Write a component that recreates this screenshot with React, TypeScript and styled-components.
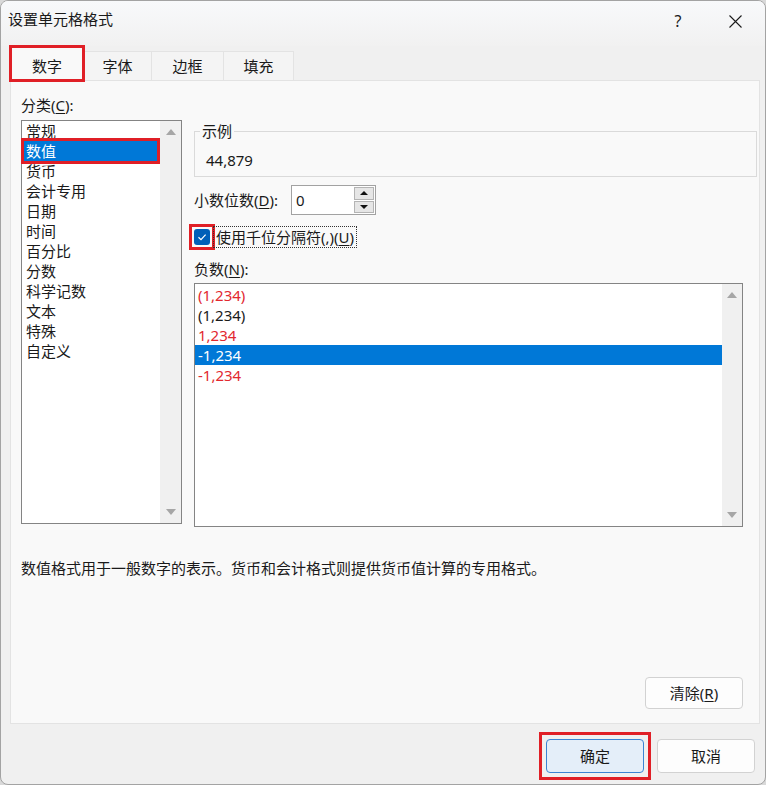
import React from 'react';
import styled, { createGlobalStyle } from 'styled-components';

const GlobalStyle = createGlobalStyle`
  html, body {
    margin: 0;
    padding: 0;
    background: #d9d9d9;
  }
  body {
    font-family: "Segoe UI", "Noto Sans", "Noto Sans CJK SC", sans-serif;
    font-size: 15px;
    line-height: 20px;
    color: #1a1a1a;
  }
  * { box-sizing: border-box; }
`

const MARK = '#e01f26'

const Dialog = styled.div`
  width: 766px;
  height: 785px;
  display: flex;
  flex-direction: column;
  background: #f0f0f0;
  border: 1px solid #a3a3a3;
  border-radius: 8px;
  overflow: hidden;
`
const TitleBar = styled.div`
  height: 45px;
  flex-shrink: 0;
  display: flex;
  align-items: flex-start;
  padding: 8px 7px 0 7px;
  background: linear-gradient(#f8f9fb, #f1f1f1);
`
const TitleText = styled.div`
  line-height: 20px;
`
const TitleActions = styled.div`
  margin-left: auto;
  margin-top: -4px;
  display: flex;
  gap: 11px;
`
const TitleAction = styled.div`
  width: 46px;
  height: 32px;
  display: flex;
  align-items: center;
  justify-content: center;
  font-size: 16px;
  color: #1b1b1b;
`
const TabStrip = styled.div`
  height: 35px;
  flex-shrink: 0;
  display: flex;
  align-items: flex-end;
  margin: 0 0 -1px 9px;
  position: relative;
  z-index: 1;
`
const Tab = styled.div<{ $active?: boolean; $w: number }>`
  width: ${p => p.$w}px;
  height: ${p => (p.$active ? 35 : 30)}px;
  display: flex;
  align-items: flex-end;
  justify-content: center;
  padding-bottom: 4px;
  background: ${p => (p.$active ? '#f9f9f9' : '#f4f4f4')};
  border: 1px solid #e3e3e3;
  border-bottom-color: ${p => (p.$active ? '#f9f9f9' : '#e3e3e3')};
  & + & { margin-left: -1px; }
  ${p => p.$active && `outline: 3px solid ${MARK}; outline-offset: -2px; position: relative; z-index: 2;`}
`
const Panel = styled.div`
  flex: 1;
  margin: 0 5px 0 9px;
  background: #f9f9f9;
  border: 1px solid #e3e3e3;
  padding: 14px 2px 14px 10px;
  display: flex;
  flex-direction: column;
`
const Columns = styled.div`
  display: flex;
  gap: 12px;
  align-items: flex-start;
`
const LeftColumn = styled.div`
  width: 161px;
  display: flex;
  flex-direction: column;
`
const RightColumn = styled.div`
  flex: 1;
  padding-top: 26px;
  display: flex;
  flex-direction: column;
`
const FieldLabel = styled.div<{ $gap?: number }>`
  line-height: 20px;
  margin-top: ${p => p.$gap || 0}px;
  white-space: nowrap;
`
const Key = styled.span`
  text-decoration: underline;
  text-underline-offset: 2px;
`
// square red frame drawn round a highlighted control
const Marker = styled.div<{ $offset: number }>`
  display: flex;
  outline: 3px solid ${MARK};
  outline-offset: ${p => p.$offset}px;
`
const ListBox = styled.div<{ $h: number; $w?: number; $gap: number }>`
  height: ${p => p.$h}px;
  width: ${p => (p.$w ? `${p.$w}px` : 'auto')};
  margin-top: ${p => p.$gap}px;
  background: #fff;
  border: 1px solid #848484;
  display: flex;
`
const ListItems = styled.div<{ $padTop?: number }>`
  flex: 1;
  padding-top: ${p => p.$padTop || 0}px;
  display: flex;
  flex-direction: column;
`
const ListRow = styled.div<{ $selected?: boolean; $marked?: boolean; $red?: boolean; $pad: number }>`
  height: 20px;
  line-height: 20px;
  padding-left: ${p => p.$pad}px;
  white-space: nowrap;
  color: ${p => (p.$selected ? '#fff' : p.$red ? '#e2282f' : '#1a1a1a')};
  background: ${p => (p.$selected ? '#0078d7' : 'transparent')};
  ${p => p.$marked && `margin: 0 3px 0 2px; outline: 3px solid ${MARK}; outline-offset: 0;`}
`
const ScrollTrack = styled.div<{ $w: number }>`
  width: ${p => p.$w}px;
  background: #f0f0f0;
  display: flex;
  flex-direction: column;
  justify-content: space-between;
  padding: 1px 0 1px;
`
const ScrollArrow = styled.div<{ $down?: boolean }>`
  height: 20px;
  display: flex;
  align-items: center;
  justify-content: center;
  &::before {
    content: '';
    border-left: 5px solid transparent;
    border-right: 5px solid transparent;
    ${p => (p.$down ? 'border-top: 6px solid #a6a6a6;' : 'border-bottom: 6px solid #a6a6a6;')}
  }
`
const SampleGroup = styled.fieldset`
  margin: 0;
  min-width: 0;
  padding: 9px 10px 6px 11px;
  border: 1px solid #dadada;
`
const SampleLegend = styled.legend`
  padding: 0 2px;
  margin-left: -6px;
  line-height: 20px;
`
const DecimalRow = styled.div`
  margin-top: 8px;
  height: 30px;
  display: flex;
  align-items: center;
`
const DecimalLabel = styled.div`
  width: 97px;
  white-space: nowrap;
`
const Spinner = styled.div`
  width: 85px;
  height: 30px;
  border: 1px solid #a2a2a2;
  background: #fff;
  display: flex;
  align-items: center;
  padding: 0 1px 0 4px;
`
const SpinValue = styled.div`
  flex: 1;
`
const SpinButtons = styled.div`
  width: 20px;
  height: 26px;
  display: flex;
  flex-direction: column;
  gap: 1px;
`
const SpinButton = styled.div<{ $down?: boolean }>`
  flex: 1;
  background: #e6e6e6;
  border: 1px solid #b4b4b4;
  display: flex;
  align-items: center;
  justify-content: center;
  &::before {
    content: '';
    border-left: 4px solid transparent;
    border-right: 4px solid transparent;
    ${p => (p.$down ? 'border-top: 4px solid #111;' : 'border-bottom: 4px solid #111;')}
  }
`
const CheckRow = styled.div`
  margin-top: 11px;
  height: 22px;
  display: flex;
  align-items: center;
`
const CheckBox = styled.div`
  width: 16px;
  height: 16px;
  border-radius: 3px;
  background: #005fb8;
  display: flex;
  align-items: center;
  justify-content: center;
`
const CheckLabel = styled.div`
  margin-left: 3px;
  height: 22px;
  line-height: 20px;
  padding: 0 2px;
  border: 1px dotted #333;
  white-space: nowrap;
`
const Description = styled.div`
  margin-top: 31px;
  line-height: 20px;
`
const ClearRow = styled.div`
  margin-top: auto;
  display: flex;
  justify-content: flex-end;
  padding-right: 14px;
`
const Button = styled.div<{ $primary?: boolean; $h: number }>`
  width: 98px;
  height: ${p => p.$h}px;
  display: flex;
  align-items: center;
  justify-content: center;
  border-radius: 4px;
  background: ${p => (p.$primary ? '#e4eef9' : '#fdfdfd')};
  border: 1px solid ${p => (p.$primary ? '#3b84d3' : '#d2d2d2')};
`
const Footer = styled.div`
  height: 60px;
  flex-shrink: 0;
  display: flex;
  justify-content: flex-end;
  align-items: flex-start;
  gap: 13px;
  padding: 15px 10px 0 0;
`

const categories = ['常规', '数值', '货币', '会计专用', '日期', '时间', '百分比', '分数', '科学记数', '文本', '特殊', '自定义']

const negatives = [
    { text: '(1,234)', red: true },
    { text: '(1,234)', red: false },
    { text: '1,234', red: true },
    { text: '-1,234', red: false, selected: true },
    { text: '-1,234', red: true },
]

const tabs = [
    { label: '数字', w: 74 },
    { label: '字体', w: 69 },
    { label: '边框', w: 73 },
    { label: '填充', w: 71 },
]

function App() {
    return (
        <>
            <GlobalStyle/>
            <Dialog>
                <TitleBar>
                    <TitleText>设置单元格格式</TitleText>
                    <TitleActions>
                        <TitleAction>?</TitleAction>
                        <TitleAction>
                            <svg width="13" height="13" viewBox="0 0 13 13">
                                <path d="M0.5 0.5 L12.5 12.5 M12.5 0.5 L0.5 12.5" stroke="#1b1b1b" strokeWidth="1.1" fill="none"/>
                            </svg>
                        </TitleAction>
                    </TitleActions>
                </TitleBar>

                <TabStrip>
                    {tabs.map((t, i) =>
                        <Tab key={t.label} $w={t.w} $active={i === 0}>{t.label}</Tab>
                    )}
                </TabStrip>

                <Panel>
                    <Columns>
                        <LeftColumn>
                            <FieldLabel>分类(<Key>C</Key>):</FieldLabel>
                            <ListBox $h={404} $gap={5}>
                                <ListItems>
                                    {categories.map(c =>
                                        c === '数值'
                                            ? <ListRow key={c} $pad={2} $selected $marked>{c}</ListRow>
                                            : <ListRow key={c} $pad={4}>{c}</ListRow>
                                    )}
                                </ListItems>
                                <ScrollTrack $w={21}>
                                    <ScrollArrow/>
                                    <ScrollArrow $down/>
                                </ScrollTrack>
                            </ListBox>
                        </LeftColumn>

                        <RightColumn>
                            <SampleGroup>
                                <SampleLegend>示例</SampleLegend>
                                <div>44,879</div>
                            </SampleGroup>

                            <DecimalRow>
                                <DecimalLabel>小数位数(<Key>D</Key>):</DecimalLabel>
                                <Spinner>
                                    <SpinValue>0</SpinValue>
                                    <SpinButtons>
                                        <SpinButton/>
                                        <SpinButton $down/>
                                    </SpinButtons>
                                </Spinner>
                            </DecimalRow>

                            <CheckRow>
                                <Marker $offset={2}>
                                    <CheckBox>
                                        <svg width="10" height="10" viewBox="0 0 10 10">
                                            <path d="M1.5 5.2 L4 7.6 L8.6 2.6" stroke="#fff" strokeWidth="1.2" fill="none"/>
                                        </svg>
                                    </CheckBox>
                                </Marker>
                                <CheckLabel>使用千位分隔符(,)(<Key>U</Key>)</CheckLabel>
                            </CheckRow>

                            <FieldLabel $gap={11}>负数(<Key>N</Key>):</FieldLabel>
                            <ListBox $h={244} $w={549} $gap={4}>
                                <ListItems $padTop={1}>
                                    {negatives.map((n, i) =>
                                        <ListRow key={i} $pad={3} $red={n.red} $selected={n.selected}>{n.text}</ListRow>
                                    )}
                                </ListItems>
                                <ScrollTrack $w={20}>
                                    <ScrollArrow/>
                                    <ScrollArrow $down/>
                                </ScrollTrack>
                            </ListBox>
                        </RightColumn>
                    </Columns>

                    <Description>数值格式用于一般数字的表示。货币和会计格式则提供货币值计算的专用格式。</Description>

                    <ClearRow>
                        <Button $h={32}>清除(<Key>R</Key>)</Button>
                    </ClearRow>
                </Panel>

                <Footer>
                    <Marker $offset={4}>
                        <Button $h={34} $primary>确定</Button>
                    </Marker>
                    <Button $h={34}>取消</Button>
                </Footer>
            </Dialog>
        </>
    )
}

export default App
